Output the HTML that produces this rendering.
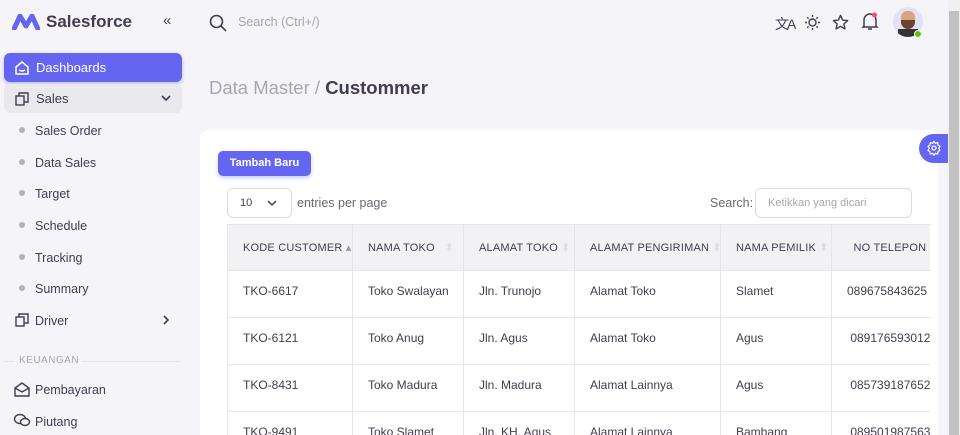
<!DOCTYPE html>
<html><head><style>
*{box-sizing:border-box;margin:0;padding:0}
html,body{width:960px;height:435px;overflow:hidden}
body{background:#f5f5f9;font-family:"Liberation Sans",sans-serif;color:#433c50;position:relative}
.abs{position:absolute}
.side{left:0;top:0;width:188px;height:435px;background:#f5f5f9}
.item{position:absolute;left:4px;width:178px;height:29px;border-radius:6px;font-size:13px;display:flex;align-items:center;padding-left:32px;color:#433c50}
.dot{position:absolute;left:19px;width:6px;height:6px;border-radius:50%;background:#b4b2ba}
.sub{position:absolute;left:35px;font-size:12.5px;color:#433c50}
svg{position:absolute}
.card{left:200px;top:130px;width:738px;height:305px;background:#fff;border-radius:8px 8px 0 0}
table{border-collapse:collapse;position:absolute;table-layout:fixed;width:760px;font-size:12px}
td,th{border:1px solid #e6e5e8;padding:0 0 0 15px;text-align:left;white-space:nowrap;overflow:hidden}
th{background:#f2f2f5;height:46px;font-size:11px;font-weight:normal;color:#433c50;letter-spacing:.2px}
td{height:47px;color:#433c50;padding-bottom:6px}
</style></head><body>
<div class="abs side">
<svg style="left:12px;top:14px" width="28" height="16" viewBox="0 0 28 16"><path d="M2 15 L8 2 L14 12 L20 2 L26 15" fill="none" stroke="#6466f1" stroke-width="5" stroke-linejoin="round" stroke-linecap="round"/></svg>
<div class="abs" style="left:46px;top:12px;font-size:17px;font-weight:bold;color:#433c50">Salesforce</div>
<div class="abs" style="left:163px;top:12px;font-size:15px;color:#433c50">«</div>
<div class="item" style="top:53px;background:#6466f1;color:#fff;box-shadow:0 2px 4px rgba(100,102,241,.4)">Dashboards</div>
<svg style="left:14px;top:60px" width="16" height="15" viewBox="0 0 16 15"><path d="M2 7 L8 2 L14 7 V14 H2 Z" fill="none" stroke="#fff" stroke-width="1.5"/><path d="M5 10 Q8 12 11 10" stroke="#fff" fill="none" stroke-width="1.4"/></svg>
<div class="item" style="top:84px;background:#e9e8ed">Sales</div>
<svg style="left:15px;top:92px" width="14" height="14" viewBox="0 0 14 14"><rect x="1" y="4" width="8" height="9" fill="none" stroke="#433c50" stroke-width="1.4"/><path d="M4 4V1h9v9h-4" fill="none" stroke="#433c50" stroke-width="1.4"/></svg>
<svg style="left:161px;top:95px" width="10" height="7" viewBox="0 0 10 7"><path d="M1 1l4 4 4-4" fill="none" stroke="#433c50" stroke-width="1.6"/></svg>
<div class="dot" style="top:127px"></div><div class="sub" style="top:124px">Sales Order</div>
<div class="dot" style="top:159px"></div><div class="sub" style="top:156px">Data Sales</div>
<div class="dot" style="top:190px"></div><div class="sub" style="top:187px">Target</div>
<div class="dot" style="top:222px"></div><div class="sub" style="top:219px">Schedule</div>
<div class="dot" style="top:254px"></div><div class="sub" style="top:251px">Tracking</div>
<div class="dot" style="top:285px"></div><div class="sub" style="top:282px">Summary</div>
<svg style="left:15px;top:313px" width="14" height="14" viewBox="0 0 14 14"><rect x="1" y="4" width="8" height="9" fill="none" stroke="#433c50" stroke-width="1.4"/><path d="M4 4V1h9v9h-4" fill="none" stroke="#433c50" stroke-width="1.4"/></svg>
<div class="sub" style="top:314px">Driver</div>
<svg style="left:163px;top:315px" width="7" height="10" viewBox="0 0 7 10"><path d="M1 1l4 4-4 4" fill="none" stroke="#433c50" stroke-width="1.6"/></svg>
<div class="abs" style="left:4px;top:361px;width:10px;border-top:1px solid #e6e5e8"></div>
<div class="abs" style="left:19px;top:355px;font-size:10px;color:#a8a6ae;letter-spacing:.5px">KEUANGAN</div>
<div class="abs" style="left:82px;top:361px;width:98px;border-top:1px solid #e6e5e8"></div>
<svg style="left:14px;top:382px" width="16" height="15" viewBox="0 0 16 15"><path d="M1 6 L8 1 L15 6 V14 H1 Z M1 6 L8 10 L15 6" fill="none" stroke="#433c50" stroke-width="1.4"/></svg>
<div class="sub" style="top:383px">Pembayaran</div>
<svg style="left:13px;top:413px" width="18" height="15" viewBox="0 0 18 15"><ellipse cx="7" cy="6" rx="5.5" ry="4.5" fill="none" stroke="#433c50" stroke-width="1.4"/><ellipse cx="12" cy="9" rx="4.5" ry="3.5" fill="#f5f5f9" stroke="#433c50" stroke-width="1.4"/></svg>
<div class="sub" style="top:415px">Piutang</div>
</div>
<svg style="left:209px;top:14px" width="18" height="18" viewBox="0 0 18 18"><circle cx="7.5" cy="7.5" r="6" fill="none" stroke="#433c50" stroke-width="1.6"/><path d="M12 12l5 5" stroke="#433c50" stroke-width="1.6"/></svg>
<div class="abs" style="left:238px;top:15px;font-size:12.5px;color:#a8a6ae">Search (Ctrl+/)</div>
<div class="abs" style="left:775px;top:14px;font-size:14px;color:#433c50;letter-spacing:-2px">文A</div>
<svg style="left:804px;top:14px" width="17" height="17" viewBox="0 0 17 17"><circle cx="8.5" cy="8.5" r="3.5" fill="none" stroke="#433c50" stroke-width="1.4"/><path d="M8.5 1v2M8.5 14v2M1 8.5h2M14 8.5h2M3.2 3.2l1.4 1.4M12.4 12.4l1.4 1.4M3.2 13.8l1.4-1.4M12.4 4.6l1.4-1.4" stroke="#433c50" stroke-width="1.4"/></svg>
<svg style="left:832px;top:14px" width="17" height="17" viewBox="0 0 24 24"><path d="M12 2l3 6.5 7 .8-5.2 4.8 1.4 7-6.2-3.6-6.2 3.6 1.4-7L2 9.3l7-.8z" fill="none" stroke="#433c50" stroke-width="2" stroke-linejoin="round"/></svg>
<svg style="left:861px;top:12px" width="18" height="19" viewBox="0 0 18 19"><path d="M3 14V8a6 6 0 0 1 12 0v6l1 1H2z M7 17h4" fill="none" stroke="#433c50" stroke-width="1.5"/><circle cx="13.5" cy="3" r="2.5" fill="#ff4c51"/></svg>
<div class="abs" style="left:893px;top:7px;width:30px;height:30px;border-radius:50%;background:#e2e2f7;overflow:hidden"><div class="abs" style="left:8px;top:4px;width:14px;height:17px;border-radius:6px;background:#d9a57e"></div><div class="abs" style="left:8px;top:13px;width:14px;height:9px;border-radius:0 0 7px 7px;background:#6b4430"></div><div class="abs" style="left:5px;top:22px;width:20px;height:10px;background:#333"></div></div>
<div class="abs" style="left:914px;top:30px;width:8px;height:8px;border-radius:50%;background:#56ca00;border:1px solid #fff"></div>
<div class="abs" style="left:209px;top:77px;font-size:18.5px;color:#a8a6ae">Data Master / <b style="color:#433c50">Custommer</b></div>
<div class="abs card"></div>
<div class="abs" style="left:218px;top:151px;width:93px;height:25px;background:#6466f1;border-radius:5px;color:#fff;font-size:11px;font-weight:bold;text-align:center;line-height:25px;box-shadow:0 2px 4px rgba(100,102,241,.35)">Tambah Baru</div>
<div class="abs" style="left:227px;top:188px;width:65px;height:30px;border:1px solid #dcdbe0;border-radius:6px;font-size:11px;padding:8px 12px">10</div>
<svg style="left:267px;top:200px" width="10" height="7" viewBox="0 0 10 7"><path d="M1 1l4 4 4-4" fill="none" stroke="#433c50" stroke-width="1.5"/></svg>
<div class="abs" style="left:297px;top:196px;font-size:12.5px;color:#6d6777">entries per page</div>
<div class="abs" style="left:710px;top:196px;font-size:12.5px;color:#6d6777">Search:</div>
<div class="abs" style="left:755px;top:188px;width:157px;height:30px;border:1px solid #dcdbe0;border-radius:6px;font-size:11px;color:#a8a6ae;padding:8px 12px">Ketikkan yang dicari</div>
<div class="abs" style="left:227px;top:224px;width:703px;height:211px;overflow:hidden">
<table style="left:0;top:0">
<colgroup><col style="width:125px"><col style="width:111px"><col style="width:111px"><col style="width:146px"><col style="width:111px"><col style="width:156px"></colgroup>
<tr><th>KODE CUSTOMER <span style="color:#999">▴</span></th><th>NAMA TOKO &nbsp; <span style="color:#ddd">⬍</span></th><th>ALAMAT TOKO <span style="color:#ddd">⬍</span></th><th>ALAMAT PENGIRIMAN <span style="color:#ddd">⬍</span></th><th>NAMA PEMILIK <span style="color:#ddd">⬍</span></th><th>&nbsp; NO TELEPON ⬍</th></tr>
<tr><td>TKO-6617</td><td>Toko Swalayan</td><td>Jln. Trunojo</td><td>Alamat Toko</td><td>Slamet</td><td>089675843625</td></tr>
<tr><td>TKO-6121</td><td>Toko Anug</td><td>Jln. Agus</td><td>Alamat Toko</td><td>Agus</td><td>&nbsp;089176593012</td></tr>
<tr><td>TKO-8431</td><td>Toko Madura</td><td>Jln. Madura</td><td>Alamat Lainnya</td><td>Agus</td><td>&nbsp;085739187652</td></tr>
<tr><td>TKO-9491</td><td>Toko Slamet</td><td>Jln. KH. Agus</td><td>Alamat Lainnya</td><td>Bambang</td><td>&nbsp;089501987563</td></tr>
</table></div>
<div class="abs" style="left:919px;top:134px;width:30px;height:29px;background:#6466f1;border-radius:15px 0 0 15px"></div>
<svg style="left:926px;top:140px" width="16" height="16" viewBox="0 0 24 24"><circle cx="12" cy="12" r="3" fill="none" stroke="#fff" stroke-width="2"/><path d="M12 2l2 3 3.5-1 .5 3.5 3 2-2 3 2 3-3 2-.5 3.5-3.5-1-2 3-2-3-3.5 1-.5-3.5-3-2 2-3-2-3 3-2 .5-3.5 3.5 1z" fill="none" stroke="#fff" stroke-width="1.8" stroke-linejoin="round"/></svg>
<div class="abs" style="left:948px;top:0;width:12px;height:435px;background:#f0f0f0"></div>
<div class="abs" style="left:949px;top:11px;width:10px;height:424px;background:#c1c1c1"></div>
</body></html>
